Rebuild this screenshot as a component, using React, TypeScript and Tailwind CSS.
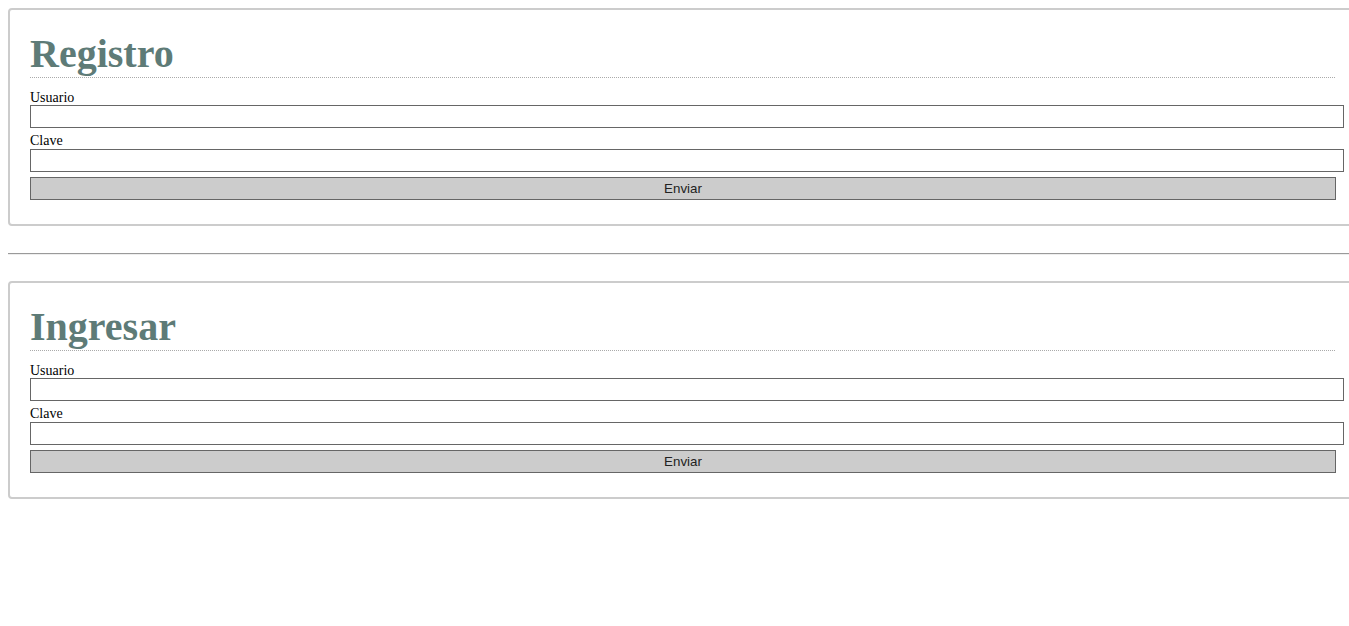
const sections = ["Registro", "Ingresar"];

function FormBox({ title }: { title: string }) {
  return (
    <section className="w-[1349px] shrink-0 border-2 border-[#cccccc] rounded-[4px] p-[20px]">
      <h1 className="h-[48px] pt-[2px] text-[40px] leading-[44px] font-bold text-[#5e7b77] border-b border-dotted border-[#aaaaaa]">
        {title}
      </h1>
      <form className="flex flex-col mt-[10px] mb-[4px]" onSubmit={(e) => e.preventDefault()}>
        <label className="block h-[16px] text-[14px] leading-[20px] text-black">Usuario</label>
        <input
          type="text"
          className="mt-[1px] w-[1314px] h-[23px] border border-[#666666] bg-white px-[3px] text-[13px] outline-none"
        />
        <label className="block mt-[3px] h-[16px] text-[14px] leading-[20px] text-black">Clave</label>
        <input
          type="password"
          className="mt-[2px] w-[1314px] h-[23px] border border-[#666666] bg-white px-[3px] text-[13px] outline-none"
        />
        <button
          type="submit"
          className="mt-[5px] w-[1306px] h-[23px] border border-[#666666] bg-[#cccccc] text-[13.33px] leading-[20px] text-[#222222] font-['Liberation_Sans',Arial,sans-serif]"
        >
          Enviar
        </button>
      </form>
    </section>
  );
}

export default function App() {
  return (
    <div className="min-h-[626px] w-full overflow-hidden bg-white p-[8px] font-['Liberation_Serif','Times_New_Roman',serif]">
      <FormBox title={sections[0]} />
      <hr className="mt-[27px] mb-[26px] w-[1349px] h-[2px] border-0 border-t border-b border-t-[#9a9a9a] border-b-[#eeeeee]" />
      <FormBox title={sections[1]} />
    </div>
  );
}
